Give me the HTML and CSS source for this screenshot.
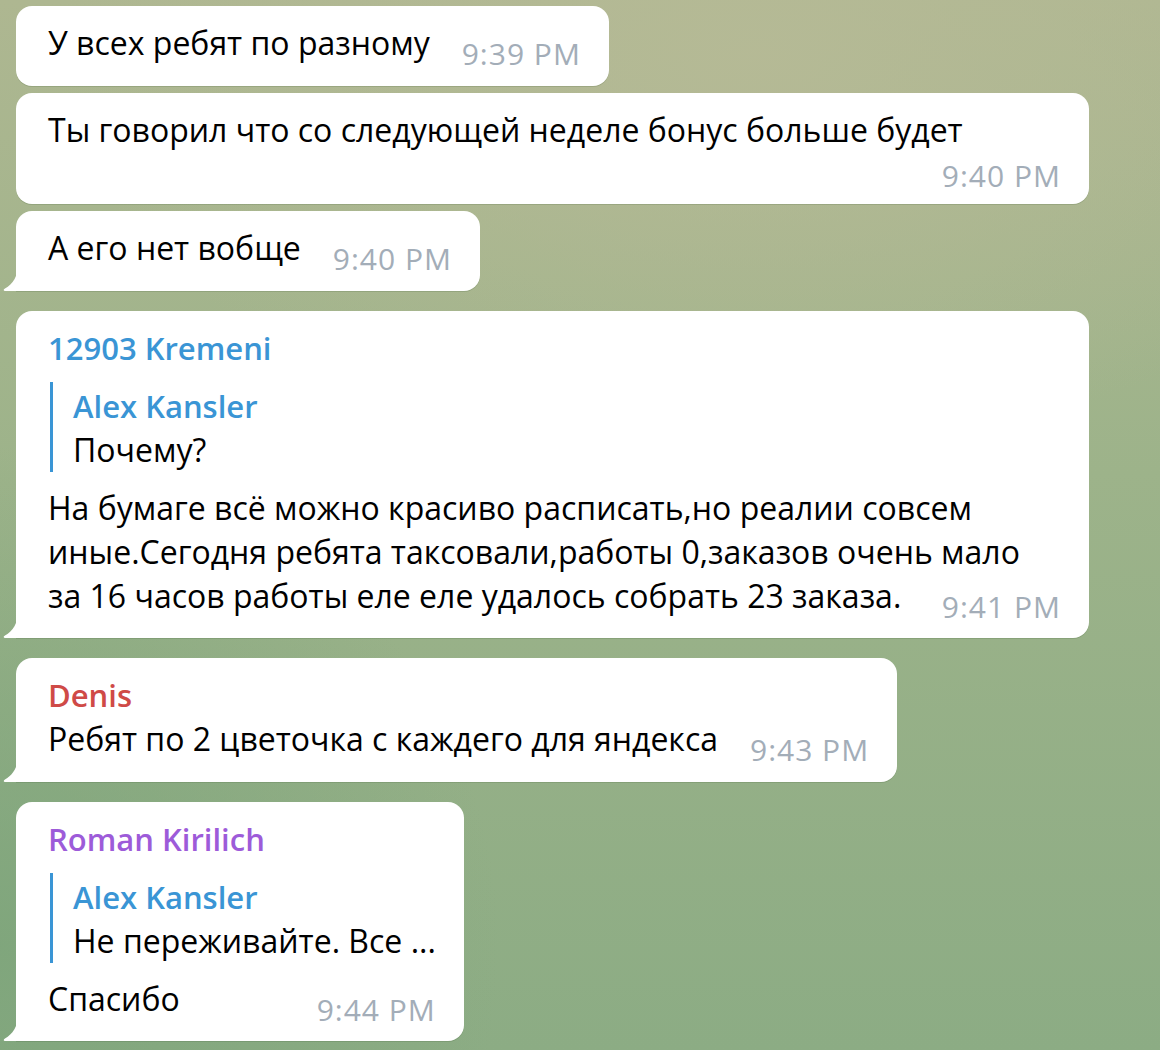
FILE: index.html
```html
<!DOCTYPE html>
<html lang="ru">
<head>
  <meta charset="UTF-8" />
  <meta name="viewport" content="width=device-width, initial-scale=1.0" />
  <title>Chat</title>
  <link rel="stylesheet" href="styles.css">
</head>
<body>
  <main class="chat">
    <!-- first group -->
    <div class="bubble">
      <p class="text">У всех ребят по разному<span class="time">9:39 PM</span></p>
    </div>
    <div class="bubble grouped">
      <p class="text">Ты говорил что со следующей неделе бонус больше будет<span class="time own-line">9:40 PM</span></p>
    </div>
    <div class="bubble grouped tail">
      <p class="text">А его нет вобще<span class="time">9:40 PM</span></p>
      <svg class="tail-icon" width="16" height="26" viewBox="0 0 16 26"><path d="M16 0 C16 11 11 19 3 23.5 C1 24.6 1.6 26 3.5 26 L16 26 Z" fill="#fff"/></svg>
    </div>

    <div class="bubble tail">
      <div class="author blue">12903 Kremeni</div>
      <div class="reply">
        <div class="reply-name">Alex Kansler</div>
        <div class="reply-text">Почему?</div>
      </div>
      <p class="text">На бумаге всё можно красиво расписать,но реалии совсем иные.Сегодня ребята таксовали,работы 0,заказов очень мало за 16 часов работы еле еле удалось собрать 23 заказа.<span class="time">9:41 PM</span></p>
      <svg class="tail-icon" width="16" height="26" viewBox="0 0 16 26"><path d="M16 0 C16 11 11 19 3 23.5 C1 24.6 1.6 26 3.5 26 L16 26 Z" fill="#fff"/></svg>
    </div>

    <div class="bubble tail">
      <div class="author red">Denis</div>
      <p class="text">Ребят по 2 цветочка с каждего для яндекса<span class="time">9:43 PM</span></p>
      <svg class="tail-icon" width="16" height="26" viewBox="0 0 16 26"><path d="M16 0 C16 11 11 19 3 23.5 C1 24.6 1.6 26 3.5 26 L16 26 Z" fill="#fff"/></svg>
    </div>

    <div class="bubble tail">
      <div class="author purple">Roman Kirilich</div>
      <div class="reply">
        <div class="reply-name">Alex Kansler</div>
        <div class="reply-text">Не переживайте. Все ...</div>
      </div>
      <p class="text">Спасибо<span class="time">9:44 PM</span></p>
      <svg class="tail-icon" width="16" height="26" viewBox="0 0 16 26"><path d="M16 0 C16 11 11 19 3 23.5 C1 24.6 1.6 26 3.5 26 L16 26 Z" fill="#fff"/></svg>
    </div>
  </main>
</body>
</html>
```

FILE: styles.css
```css
* {
  margin: 0;
  padding: 0;
  box-sizing: border-box;
}

body {
  font-family: 'Open Sans', 'Noto Sans', sans-serif;
  min-height: 100vh;
  overflow: hidden;
  background:
    radial-gradient(ellipse 700px 400px at 65% 5%, rgba(182, 186, 150, 0.9), rgba(182, 186, 150, 0) 100%),
    radial-gradient(ellipse 500px 500px at 0% 90%, rgba(124, 164, 122, 0.8), rgba(124, 164, 122, 0) 100%),
    linear-gradient(180deg, #aeb791 0%, #9db38a 45%, #8cac84 100%);
}

/* Chat column */
.chat {
  display: flex;
  flex-direction: column;
  align-items: flex-start;
  padding: 6px 0 0 16px;
}

.bubble {
  position: relative;
  display: flow-root;
  max-width: 1073px;
  margin-top: 20px;
  padding: 15px 28px 20.5px 32px;
  background: #fff;
  border-radius: 16px;
  box-shadow: 0 1px 0 rgba(60, 90, 50, 0.18);
  color: #000;
  font-size: 32px;
  line-height: 44px;
}

.bubble:first-child {
  margin-top: 0;
}

.bubble.grouped {
  margin-top: 7px;
}

.bubble.tail {
  border-bottom-left-radius: 0;
}

.tail-icon {
  position: absolute;
  left: -14px;
  bottom: 0;
  display: block;
}

.time {
  float: right;
  margin: 21px 0 -4px 32px;
  font-size: 30px;
  letter-spacing: 1px;
  line-height: 24px;
  color: #a3adb8;
}

.time.own-line {
  margin-top: 12px;
}

/* Sender names */
.author {
  font-size: 31px;
  font-weight: 600;
}

.blue { color: #3a95d5; }
.red { color: #cf4a47; }
.purple { color: #9d5bd9; }

/* Quoted message */
.reply {
  margin: 12px 0 14px 2px;
  padding: 2px 0 0 20px;
  border-left: 3px solid #3a95d5;
}

.reply-name {
  color: #3a95d5;
  font-size: 31px;
  font-weight: 600;
}
```
